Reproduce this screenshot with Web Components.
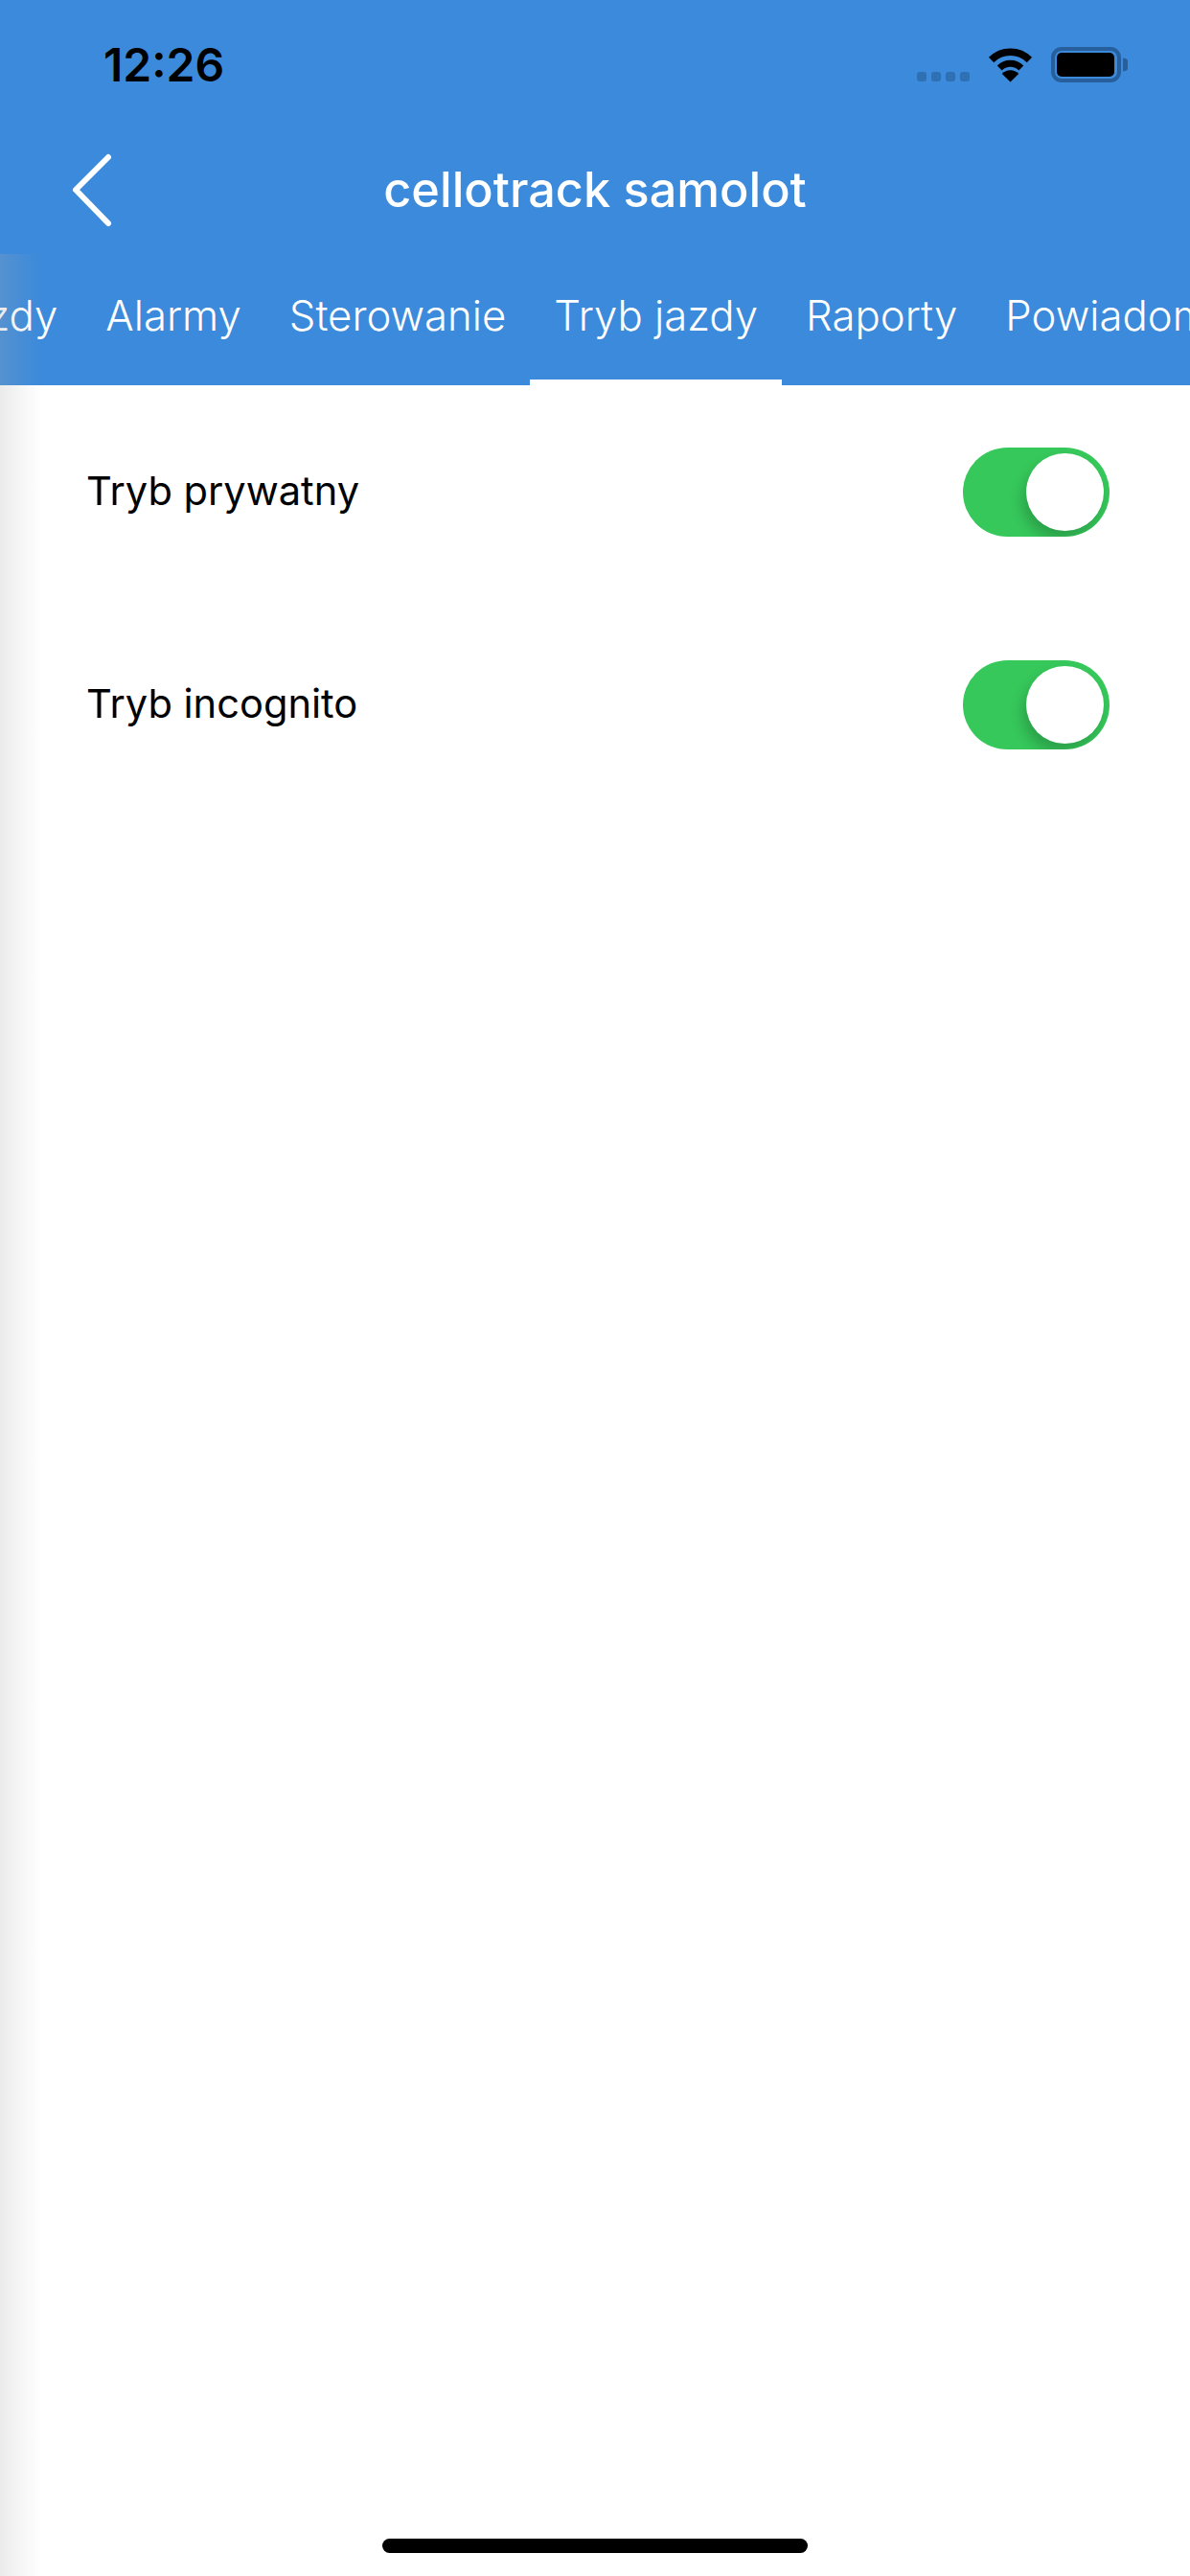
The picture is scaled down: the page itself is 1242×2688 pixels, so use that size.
<!DOCTYPE html>
<html lang="pl">
<head>
<meta charset="utf-8">
<title>cellotrack samolot</title>
<style>
    html, body { margin: 0; padding: 0; background: #fff; }
    body { font-family: Inter, "Noto Sans", sans-serif; }
</style>
</head>
<body>
<app-screen>
    <app-header title="cellotrack samolot" time="12:26">
        <tab-item>Historia jazdy</tab-item>
        <tab-item>Alarmy</tab-item>
        <tab-item>Sterowanie</tab-item>
        <tab-item active>Tryb jazdy</tab-item>
        <tab-item>Raporty</tab-item>
        <tab-item>Powiadomienia</tab-item>
    </app-header>
    <setting-row>Tryb prywatny</setting-row>
    <setting-row>Tryb incognito</setting-row>
</app-screen>
<script>
class AppScreen extends HTMLElement {
    constructor() {
        super();
        this.attachShadow({ mode: 'open' });
        this.shadowRoot.innerHTML = `
            <style>
                :host {
                    display: flex;
                    flex-direction: column;
                    position: relative;
                    width: 1242px;
                    height: 2688px;
                    overflow: hidden;
                    background: #fff;
                }
                .rows {
                    display: flex;
                    flex-direction: column;
                    gap: 129px;
                    padding: 65px 84px 0 90px;
                    flex: 1;
                }
                .edge {
                    position: absolute;
                    left: 0;
                    top: 265px;
                    bottom: 0;
                    width: 44px;
                    background: linear-gradient(to right,
                        rgba(170, 170, 170, .235),
                        rgba(170, 170, 170, .176) 10px,
                        rgba(170, 170, 170, .08) 27px,
                        rgba(170, 170, 170, 0));
                    pointer-events: none;
                }
                .home {
                    position: absolute;
                    left: 399px;
                    top: 2649px;
                    width: 444px;
                    height: 15px;
                    border-radius: 8px;
                    background: #000;
                }
            </style>
            <slot></slot>
            <div class="rows"><slot name="rows"></slot></div>
            <div class="edge"></div>
            <div class="home"></div>
        `;
    }

    connectedCallback() {
        this.querySelectorAll('setting-row').forEach(row => row.slot = 'rows');
    }
}

class AppHeader extends HTMLElement {
    constructor() {
        super();
        this.attachShadow({ mode: 'open' });
    }

    connectedCallback() {
        this.shadowRoot.innerHTML = `
            <style>
                :host {
                    display: block;
                    height: 402px;
                    background: #3b8adb;
                    color: #fff;
                    font-family: Inter, "Noto Sans", sans-serif;
                    overflow: hidden;
                }
                .status {
                    display: flex;
                    align-items: flex-start;
                    height: 130px;
                    padding: 41px 65px 0 108px;
                    box-sizing: border-box;
                }
                .time {
                    font-size: 48px;
                    line-height: 54px;
                    font-weight: 600;
                    color: #000;
                    flex: 1;
                }
                .dots {
                    display: flex;
                    gap: 5px;
                    margin: 34px 19px 0 0;
                }
                .dots i {
                    width: 10px;
                    height: 10px;
                    border-radius: 3px;
                    background: #2f6fb4;
                }
                .status svg { display: block; margin-top: 8px; }
                .wifi { margin-right: 19px; }
                .nav {
                    display: flex;
                    align-items: center;
                    justify-content: center;
                    position: relative;
                    height: 136px;
                }
                .back {
                    position: absolute;
                    left: 74px;
                    top: 28px;
                }
                .title {
                    font-size: 50.4px;
                    font-weight: 500;
                    line-height: 60px;
                }
                .tabs {
                    display: flex;
                    height: 136px;
                    margin-left: -239px;
                    white-space: nowrap;
                }
            </style>
            <div class="status">
                <span class="time">${this.getAttribute('time')}</span>
                <span class="dots"><i></i><i></i><i></i><i></i></span>
                <svg class="wifi" width="47" height="37" viewBox="0 0 47 37">
                    <path d="M3.6 13.5a28 28 0 0 1 39.8 0" fill="none" stroke="#000" stroke-width="7.5"/>
                    <path d="M12.2 22a16 16 0 0 1 22.6 0" fill="none" stroke="#000" stroke-width="7"/>
                    <path d="M23.5 36.5 14.8 28a12 12 0 0 1 17.4 0z" fill="#000"/>
                </svg>
                <svg width="80" height="38" viewBox="0 0 80 38">
                    <rect x="2" y="2" width="69" height="33" rx="9" fill="none" stroke="#275f9c" stroke-width="4"/>
                    <rect x="6" y="6" width="60" height="25" rx="5" fill="#000"/>
                    <path d="M75 11.5a7 7 0 0 1 0 14z" fill="#275f9c"/>
                </svg>
            </div>
            <div class="nav">
                <svg class="back" width="48" height="80" viewBox="0 0 48 80">
                    <path d="M39 6 5 40l34 35" fill="none" stroke="#fff" stroke-width="6" stroke-linecap="round" stroke-linejoin="round"/>
                </svg>
                <span class="title">${this.getAttribute('title')}</span>
            </div>
            <div class="tabs"><slot></slot></div>
        `;
    }
}

class TabItem extends HTMLElement {
    constructor() {
        super();
        this.attachShadow({ mode: 'open' });
        this.shadowRoot.innerHTML = `
            <style>
                :host {
                    display: block;
                    flex: none;
                    box-sizing: border-box;
                    height: 136px;
                    padding: 37px 25px 0;
                    font-size: 43.7px;
                    font-weight: 300;
                    line-height: 54px;
                }
                :host([active]) {
                    border-bottom: 6px solid #fff;
                }
            </style>
            <slot></slot>
        `;
    }
}

class ToggleSwitch extends HTMLElement {
    constructor() {
        super();
        this.attachShadow({ mode: 'open' });
        this.shadowRoot.innerHTML = `
            <style>
                :host {
                    display: flex;
                    justify-content: flex-end;
                    align-items: center;
                    flex: none;
                    box-sizing: border-box;
                    width: 153px;
                    height: 93px;
                    padding-right: 6px;
                    border-radius: 47px;
                    background: #36c85b;
                    overflow: hidden;
                }
                .knob {
                    width: 81px;
                    height: 81px;
                    border-radius: 50%;
                    background: #fff;
                    box-shadow: -4px 9px 14px rgba(0, 0, 0, .2);
                }
            </style>
            <div class="knob"></div>
        `;
    }
}

class SettingRow extends HTMLElement {
    constructor() {
        super();
        this.attachShadow({ mode: 'open' });
        this.shadowRoot.innerHTML = `
            <style>
                :host {
                    display: flex;
                    align-items: center;
                    justify-content: space-between;
                    height: 93px;
                    color: #000;
                    font-family: Inter, "Noto Sans", sans-serif;
                    font-size: 41.6px;
                    font-weight: 400;
                }
                span { padding-bottom: 4px; }
            </style>
            <span><slot></slot></span>
            <toggle-switch></toggle-switch>
        `;
    }
}

customElements.define('tab-item', TabItem);
customElements.define('toggle-switch', ToggleSwitch);
customElements.define('setting-row', SettingRow);
customElements.define('app-header', AppHeader);
customElements.define('app-screen', AppScreen);
</script>
</body>
</html>
